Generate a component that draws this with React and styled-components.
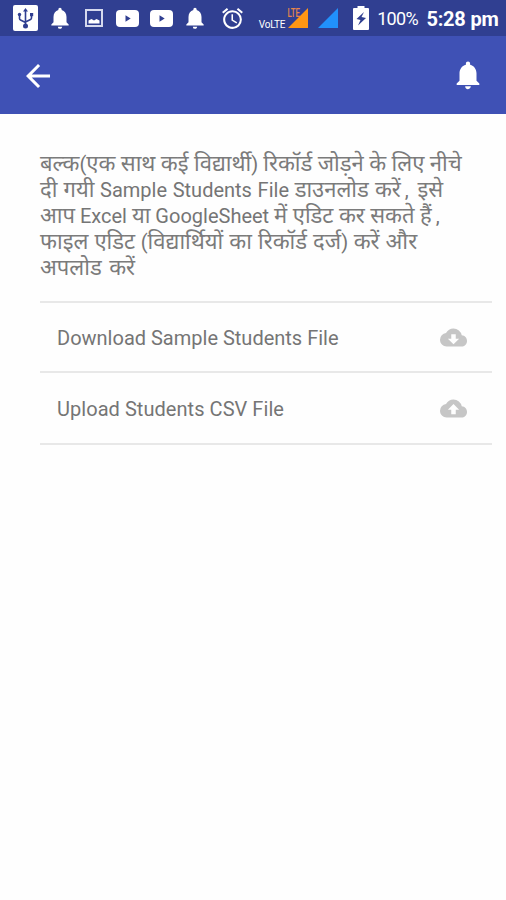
import styled, { createGlobalStyle } from "styled-components"
import {
  MdAccessAlarm,
  MdArrowBack,
  MdCloudDownload,
  MdCloudUpload,
  MdNotifications,
} from "react-icons/md"

const indigo = "#3f51b5"
const darkIndigo = "#303f91"
const textGrey = "#757575"
const lineGrey = "#e8e8e8"

const GlobalStyle = createGlobalStyle`
  * {
    box-sizing: border-box;
  }

  body {
    margin: 0;
    background-color: #fefefe;
    font-family: Roboto, "Noto Sans Devanagari", "Noto Sans", sans-serif;
  }

  svg {
    display: block;
    flex-shrink: 0;
  }
`

const Screen = styled.div`
  width: 506px;
  min-height: 900px;
  background-color: #fefefe;
`

const StatusBar = styled.header`
  display: flex;
  align-items: center;
  height: 36px;
  padding-left: 13px;
  color: white;
  background-color: ${darkIndigo};
  overflow: hidden;
`

const StatusItem = styled.div`
  display: flex;
  flex: none;
  align-items: center;
  justify-content: center;
  width: ${({ $width }) => $width}px;
  height: 36px;
  margin-left: ${({ $gap }) => $gap || 0}px;
`

const UsbBadge = styled.div`
  display: flex;
  align-items: center;
  justify-content: center;
  width: 25px;
  height: 26px;
  border-radius: 2px;
  color: ${darkIndigo};
  background-color: white;
`

const VolteLabel = styled.span`
  padding-top: 13px;
  font-size: 10px;
  line-height: 12px;
  letter-spacing: -0.2px;
  white-space: nowrap;
`

const BatteryLabel = styled.span`
  padding-top: 1px;
  font-size: 18px;
  line-height: 35px;
  letter-spacing: -0.7px;
  white-space: nowrap;
`

const Clock = styled.span`
  padding-top: 2px;
  font-size: 20px;
  line-height: 34px;
  font-weight: 700;
  letter-spacing: -0.2px;
  white-space: nowrap;
`

const AppBar = styled.nav`
  display: flex;
  align-items: center;
  justify-content: space-between;
  height: 78px;
  padding: 1px 21px 0 20px;
  background-color: ${indigo};
`

const IconButton = styled.button`
  display: flex;
  padding: 0 0 ${({ $lift }) => $lift || 0}px;
  border: none;
  color: white;
  background: none;
  cursor: pointer;
`

const Content = styled.main`
  padding: 37px 14px 0 40px;
  color: ${textGrey};
`

const Instructions = styled.p`
  margin: 0;
  padding-bottom: 20px;
  font-size: 20px;
  line-height: 26px;
`

const Line = styled.span`
  display: block;
  height: 26px;
  word-spacing: ${({ $spacing }) => $spacing || 0}px;
  white-space: nowrap;
`

const Hindi = styled.span`
  color: #7b7b7b;
  font-size: 22px;
  line-height: 1;
`

const Comma = styled.span`
  margin: 0 3px 0 4px;
`

const ActionList = styled.ul`
  margin: 0;
  padding: 0;
  list-style: none;
  border-top: 2px solid ${lineGrey};
`

const ActionRow = styled.li`
  display: flex;
  align-items: center;
  justify-content: space-between;
  height: ${({ $height }) => $height}px;
  padding: 1px 25px 0 17px;
  border-bottom: 2px solid ${lineGrey};
  font-size: 20px;

  svg {
    color: #c6c6c6;
  }
`

const ActionLabel = styled.span`
  padding-top: 1px;
  letter-spacing: ${({ $tracking }) => $tracking || 0}px;
  white-space: nowrap;
`

const UsbIcon = () => (
  <svg width="19" height="22" viewBox="0 0 19 22" fill="none" stroke={darkIndigo} strokeWidth="1.6">
    <path d="M9.500 18V3M3.500 8v3.500q0 1 1 1.500l5 2.500M15.500 8v3q0 1-1 1.500l-5 2.500" />
    <path d="M7 4.500L9.500 1 12 4.500z" fill={darkIndigo} stroke="none" />
    <circle cx="9.500" cy="19" r="2.500" fill={darkIndigo} stroke="none" />
    <circle cx="3.500" cy="7.500" r="1.700" fill={darkIndigo} stroke="none" />
    <path d="M14 6h3.200v3.200H14z" fill={darkIndigo} stroke="none" />
  </svg>
)

const PictureIcon = () => (
  <svg width="18" height="18" viewBox="0 0 18 18">
    <rect x="1" y="1" width="16" height="16" fill="none" stroke="#d5d9ee" strokeWidth="2" />
    <path d="M3.500 14.500v-3l3-1.500 2.500 1.500 2.500-1.500 3 1.500v3z" fill="white" />
  </svg>
)

const VideoIcon = () => (
  <svg width="23" height="17" viewBox="0 0 23 17">
    <rect width="23" height="17" rx="4" fill="white" />
    <path d="M9.500 5.200v6.600l5.200-3.300z" fill={darkIndigo} />
  </svg>
)

const LteSignalIcon = () => (
  <svg width="22" height="36" viewBox="0 0 22 36">
    <path d="M1 28L21 8v20z" fill="#ff9613" />
    <text
      x="0.5"
      y="17"
      fill="#e8864a"
      fontFamily="Roboto, sans-serif"
      fontSize="12"
      fontWeight="500"
      textLength="12.5"
      lengthAdjust="spacingAndGlyphs"
    >
      LTE
    </text>
  </svg>
)

const SignalIcon = () => (
  <svg width="20" height="20" viewBox="0 0 20 20">
    <path d="M0 20L20 0v20z" fill="#2191fb" />
  </svg>
)

const BatteryIcon = () => (
  <svg width="16" height="24" viewBox="0 0 16 24">
    <path d="M4.500 0h7v2H15a1 1 0 011 1v20a1 1 0 01-1 1H1a1 1 0 01-1-1V3a1 1 0 011-1h3.500z" fill="white" />
    <path d="M11 6L3.500 13l4 1-2.500 5.500 8-7.500-4.500-1z" fill={darkIndigo} />
  </svg>
)

const instructionLines = [
  { text: "बल्क(एक साथ कई विद्यार्थी) रिकॉर्ड जोड़ने के लिए नीचे", spacing: 0 },
  { text: "दी गयी Sample Students File डाउनलोड करें, इसे", spacing: 0.7 },
  { text: "आप Excel या GoogleSheet में एडिट कर सकते हैं,", spacing: 0 },
  { text: "फाइल एडिट (विद्यार्थियों का रिकॉर्ड दर्ज) करें और", spacing: 0.6 },
  { text: "अपलोड करें", spacing: 2 },
]

const actions = [
  { label: "Download Sample Students File", Icon: MdCloudDownload, height: 70, tracking: 0 },
  { label: "Upload Students CSV File", Icon: MdCloudUpload, height: 72, tracking: 0.05 },
]

// Devanagari runs are set a little larger than the Latin ones
const renderMixedText = (text) =>
  text.split(/([\u0900-\u097F]+(?: [\u0900-\u097F]+)*|,)/).map((run, i) => {
    if (run === ",") return <Comma key={i}>,</Comma>
    return i % 2 ? <Hindi key={i}>{run}</Hindi> : run
  })

export default function App() {
  return (
    <>
      <GlobalStyle />
      <Screen>
        <StatusBar>
          <StatusItem $width={25}>
            <UsbBadge>
              <UsbIcon />
            </UsbBadge>
          </StatusItem>
          <StatusItem $width={18} $gap={12.5}>
            <MdNotifications size={26} />
          </StatusItem>
          <StatusItem $width={18} $gap={16}>
            <PictureIcon />
          </StatusItem>
          <StatusItem $width={23} $gap={13.5}>
            <VideoIcon />
          </StatusItem>
          <StatusItem $width={23} $gap={11}>
            <VideoIcon />
          </StatusItem>
          <StatusItem $width={18} $gap={12.5}>
            <MdNotifications size={26} />
          </StatusItem>
          <StatusItem $width={21} $gap={18.5}>
            <MdAccessAlarm size={25} />
          </StatusItem>
          <StatusItem $width={26} $gap={16}>
            <VolteLabel>VoLTE</VolteLabel>
          </StatusItem>
          <StatusItem $width={22} $gap={1.5}>
            <LteSignalIcon />
          </StatusItem>
          <StatusItem $width={20} $gap={9.5}>
            <SignalIcon />
          </StatusItem>
          <StatusItem $width={16} $gap={15}>
            <BatteryIcon />
          </StatusItem>
          <StatusItem $width={40} $gap={8.5}>
            <BatteryLabel>100%</BatteryLabel>
          </StatusItem>
          <StatusItem $width={71} $gap={9.5}>
            <Clock>5:28 pm</Clock>
          </StatusItem>
        </StatusBar>

        <AppBar>
          <IconButton aria-label="Back">
            <MdArrowBack size={36} />
          </IconButton>
          <IconButton aria-label="Notifications" $lift={2}>
            <MdNotifications size={34} />
          </IconButton>
        </AppBar>

        <Content>
          <Instructions>
            {instructionLines.map(({ text, spacing }) => (
              <Line key={text} $spacing={spacing}>{renderMixedText(text)}</Line>
            ))}
          </Instructions>

          <ActionList>
            {actions.map(({ label, Icon, height, tracking }) => (
              <ActionRow key={label} $height={height}>
                <ActionLabel $tracking={tracking}>{label}</ActionLabel>
                <Icon size={27} />
              </ActionRow>
            ))}
          </ActionList>
        </Content>
      </Screen>
    </>
  )
}
